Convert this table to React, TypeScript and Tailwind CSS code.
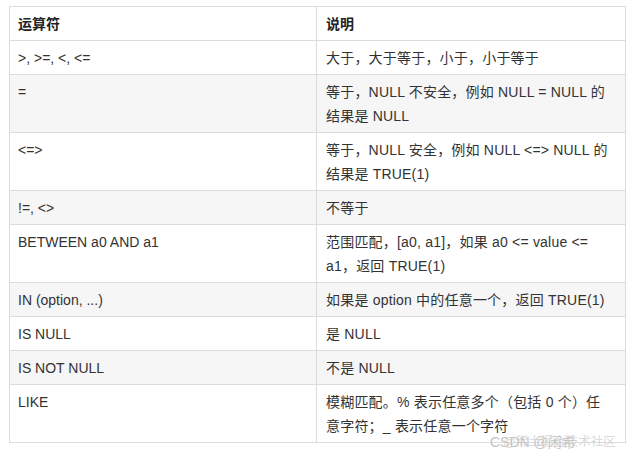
import type { ReactNode } from 'react'

interface Row {
  op: string
  desc: ReactNode
}

const rows: Row[] = [
  { op: '>, >=, <, <=', desc: '大于，大于等于，小于，小于等于' },
  { op: '=', desc: <>等于，NULL 不安全，例如 NULL = NULL 的<br />结果是 NULL</> },
  { op: '<=>', desc: <>等于，NULL 安全，例如 NULL &lt;=&gt; NULL 的<br />结果是 TRUE(1)</> },
  { op: '!=, <>', desc: '不等于' },
  { op: 'BETWEEN a0 AND a1', desc: <>范围匹配，[a0, a1]，如果 a0 &lt;= value &lt;=<br />a1，返回 TRUE(1)</> },
  { op: 'IN (option, ...)', desc: '如果是 option 中的任意一个，返回 TRUE(1)' },
  { op: 'IS NULL', desc: '是 NULL' },
  { op: 'IS NOT NULL', desc: '不是 NULL' },
  { op: 'LIKE', desc: <>模糊匹配。% 表示任意多个（包括 0 个）任<br />意字符；_ 表示任意一个字符</> },
]

const font = "font-['Liberation_Sans','Noto_Sans_CJK_SC',sans-serif]"

export default function App() {
  return (
    <div className={`relative w-[635px] h-[461px] bg-white pt-[6px] pl-[9px] ${font}`}>
      <table className="w-[616px] table-fixed border-collapse text-[14px] leading-[24px] text-[#333]">
        <colgroup>
          <col className="w-[307px]" />
          <col className="w-[309px]" />
        </colgroup>
        <thead>
          <tr className="bg-white">
            <th className="border border-[#dcdcdc] pl-2 pt-[5px] pb-[4px] text-left font-semibold text-[#222]">运算符</th>
            <th className="border border-[#dcdcdc] pl-[9px] pt-[5px] pb-[4px] text-left font-semibold text-[#222]">说明</th>
          </tr>
        </thead>
        <tbody>
          {rows.map((r, i) => (
            <tr key={i} className={i % 2 === 1 ? 'bg-[#f6f6f6]' : 'bg-white'}>
              <td className="border border-[#dcdcdc] pl-2 pt-[5px] pb-[4px] align-top whitespace-nowrap">{r.op}</td>
              <td className="border border-[#dcdcdc] pl-[9px] pr-1 pt-[5px] pb-[4px] align-top whitespace-nowrap tracking-[0.2px]">{r.desc}</td>
            </tr>
          ))}
        </tbody>
      </table>

      {/* site watermarks, overlapped */}
      <div className="absolute left-[490px] top-[434px] whitespace-nowrap text-[14px] leading-[16px] text-[#b5b5b5] opacity-80 [text-shadow:0_0_2px_#fff]">
        CSDN @闲希
      </div>
      <div className="absolute left-[503px] top-[434px] whitespace-nowrap text-[12.5px] leading-[16px] text-[#c4c4c4] opacity-60 [text-shadow:0_0_2px_#fff]">
        @稀土掘金技术社区
      </div>
    </div>
  )
}
